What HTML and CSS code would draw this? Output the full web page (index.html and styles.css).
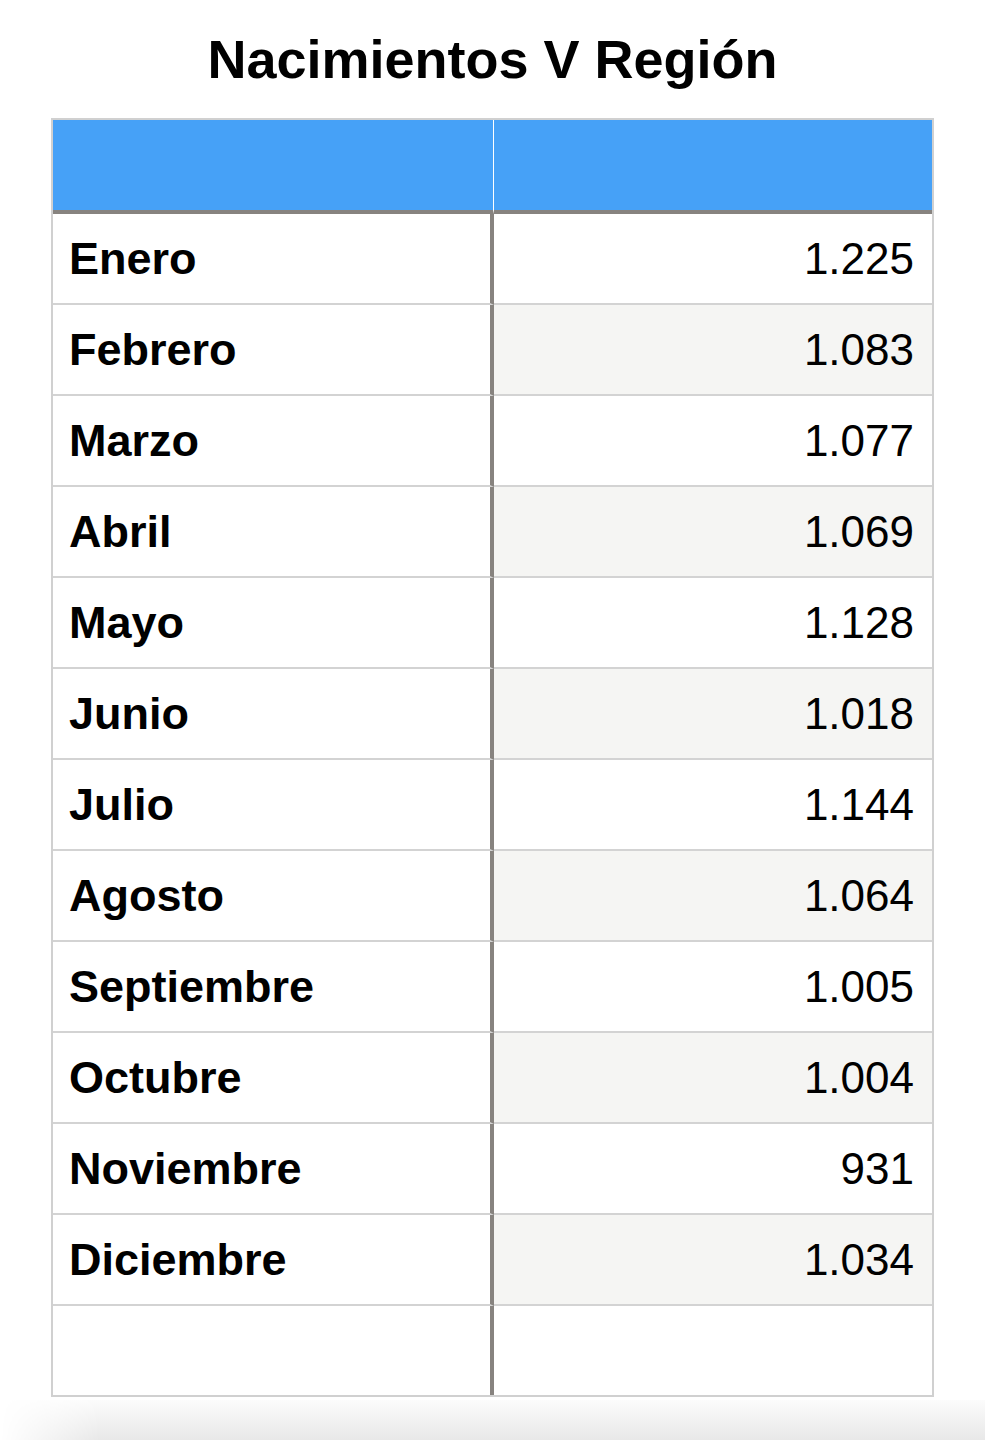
FILE: index.html
```html
<!DOCTYPE html>
<html lang="es">
<head>
<meta charset="utf-8">
<title>Nacimientos V Región</title>
<link rel="stylesheet" href="styles.css">
</head>
<body>
<h1 class="title">Nacimientos V Región</h1>
<div class="table">
  <div class="cell head head-left"></div>
  <div class="cell head"></div>

  <div class="cell label">Enero</div><div class="cell num">1.225</div>
  <div class="cell label">Febrero</div><div class="cell num alt">1.083</div>
  <div class="cell label">Marzo</div><div class="cell num">1.077</div>
  <div class="cell label">Abril</div><div class="cell num alt">1.069</div>
  <div class="cell label">Mayo</div><div class="cell num">1.128</div>
  <div class="cell label">Junio</div><div class="cell num alt">1.018</div>
  <div class="cell label">Julio</div><div class="cell num">1.144</div>
  <div class="cell label">Agosto</div><div class="cell num alt">1.064</div>
  <div class="cell label">Septiembre</div><div class="cell num">1.005</div>
  <div class="cell label">Octubre</div><div class="cell num alt">1.004</div>
  <div class="cell label">Noviembre</div><div class="cell num">931</div>
  <div class="cell label">Diciembre</div><div class="cell num alt">1.034</div>
  <div class="cell label last"></div><div class="cell num last"></div>
</div>
<div class="shade"></div>
</body>
</html>
```

FILE: styles.css
```css
html, body {
  margin: 0;
  padding: 0;
  background: #ffffff;
}

body {
  font-family: "Liberation Sans", Arial, Helvetica, sans-serif;
  color: #000;
  width: 985px;
  height: 1440px;
  overflow: hidden;
  display: flex;
  flex-direction: column;
  align-items: flex-start;
}

.title {
  align-self: stretch;
  margin: 32px 0 0;
  font-size: 54px;
  line-height: 54px;
  font-weight: 700;
  text-align: center;
}

.table {
  margin: 32px 0 0 51px;
  width: 883px;
  box-sizing: border-box;
  border: 2px solid #d0d0d0;
  display: grid;
  grid-template-columns: 441px 1fr;
}

.cell {
  box-sizing: border-box;
  height: 91px;
  display: flex;
  align-items: center;
  font-size: 44px;
  border-bottom: 2px solid #d3d3d3;
  background: #ffffff;
}

.head {
  height: 94px;
  background: #46a1f7;
  border-bottom: 4px solid #87837f;
}

.head-left {
  border-right: 1px solid #ffffff;
}

.label {
  font-size: 45px;
  font-weight: 700;
  padding-left: 16px;
  border-right: 4px solid #87837f;
}

.num {
  justify-content: flex-end;
  padding-right: 18px;
}

.alt {
  background: #f5f5f3;
}

.last {
  border-bottom: none;
  height: 89px;
}

.shade {
  margin-top: auto;
  width: 100%;
  height: 40px;
  background: linear-gradient(to bottom, #fcfcfc, #e8e8e8);
  -webkit-mask-image: linear-gradient(to right, transparent 0, #000 100px);
  mask-image: linear-gradient(to right, transparent 0, #000 100px);
}
```
